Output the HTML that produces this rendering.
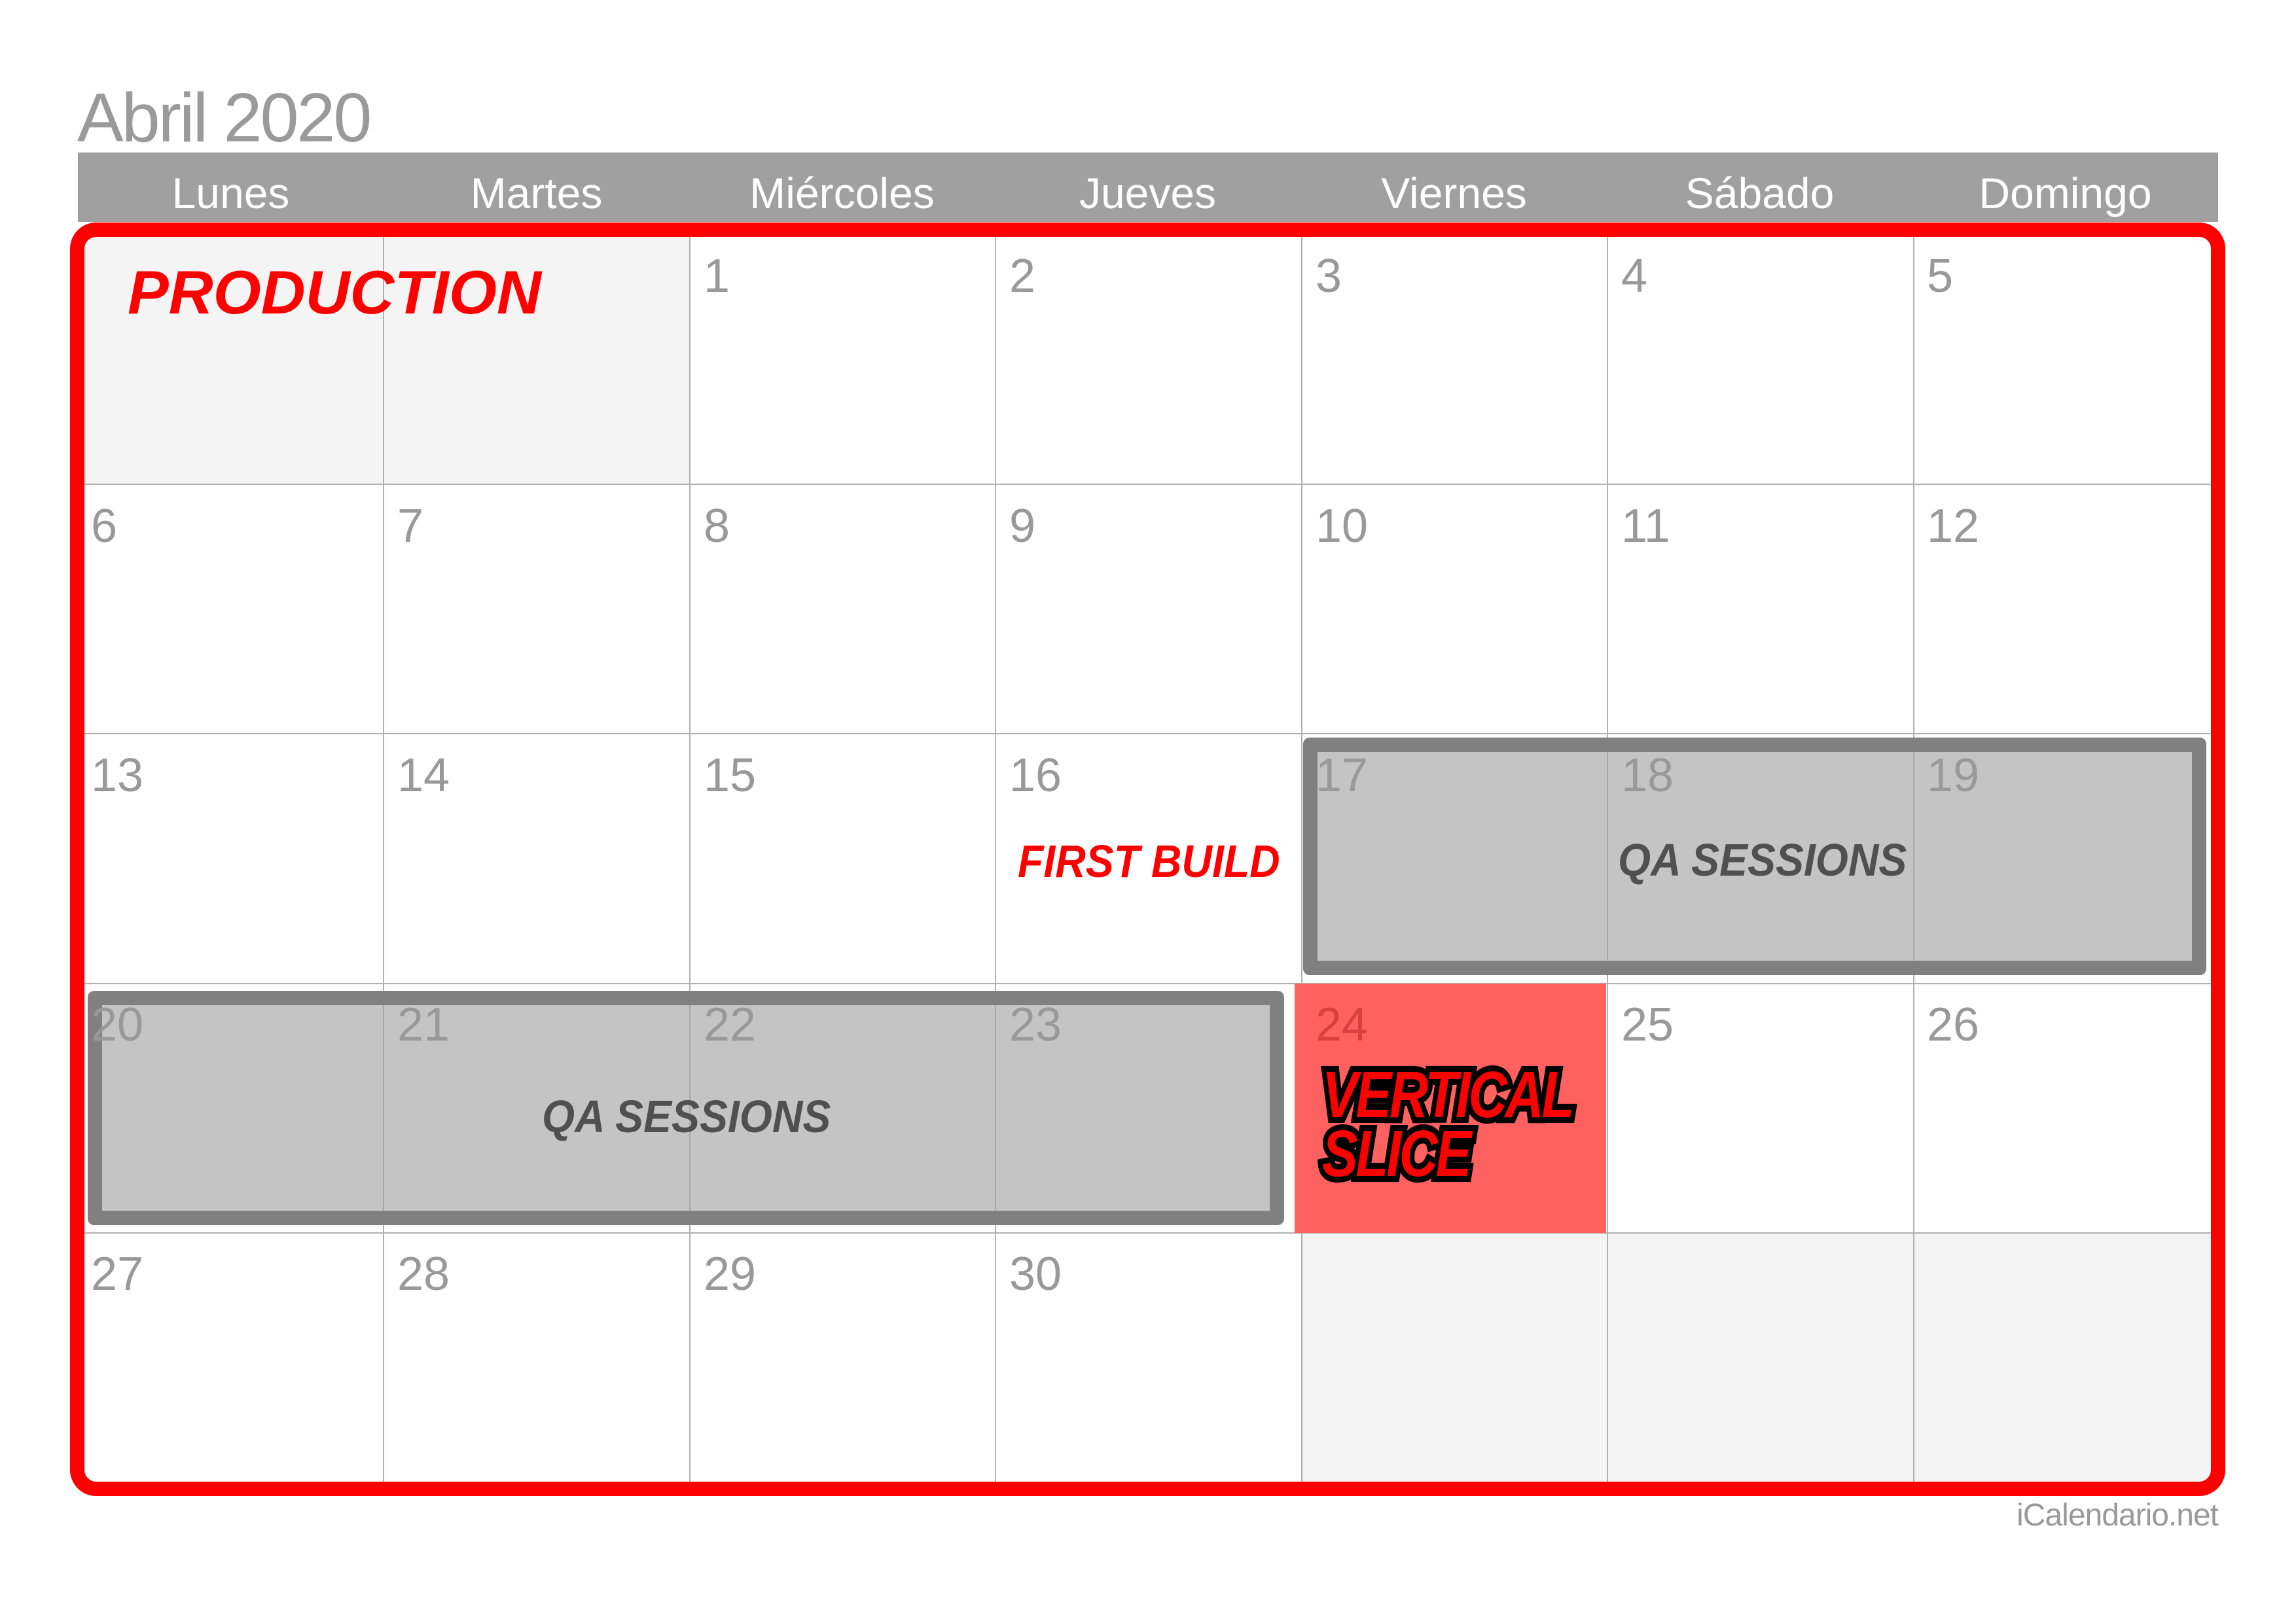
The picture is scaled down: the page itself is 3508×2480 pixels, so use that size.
<!DOCTYPE html>
<html><head><meta charset="utf-8"><style>
*{margin:0;padding:0;box-sizing:border-box}
body{width:3508px;height:2480px;background:#fff;position:relative;overflow:hidden;font-family:"Liberation Sans",sans-serif}
.a{position:absolute}
.title{left:118px;top:127px;font-size:106px;color:#9a9a9a;letter-spacing:-3px;line-height:1}
.hdr{left:119px;top:233px;width:3270px;height:106px;background:#a0a0a0}
.dn{top:262px;width:467px;text-align:center;color:#fff;font-size:66px;line-height:1}
.num{font-size:72px;color:#999;line-height:1}
.bi{font-weight:bold;font-style:italic;white-space:nowrap;line-height:1}
</style></head><body>
<div class="a title">Abril 2020</div>
<div class="a hdr"></div>
<div class="a dn" style="left:119px">Lunes</div>
<div class="a dn" style="left:586px">Martes</div>
<div class="a dn" style="left:1053px">Miércoles</div>
<div class="a dn" style="left:1520px">Jueves</div>
<div class="a dn" style="left:1988px">Viernes</div>
<div class="a dn" style="left:2455px">Sábado</div>
<div class="a dn" style="left:2922px">Domingo</div>

<div class="a" style="left:119px;top:348px;width:3270px;height:1930px;overflow:hidden;border-radius:30px">
<svg width="3270" height="1930" style="position:absolute;left:0;top:0">
<rect x="0" y="0" width="934" height="392" fill="#f4f4f4"/>
<rect x="1869" y="1536" width="1401" height="400" fill="#f4f4f4"/>
<g stroke="#b0b0b0" stroke-width="2">
<line x1="467" y1="0" x2="467" y2="1930"/><line x1="935" y1="0" x2="935" y2="1930"/>
<line x1="1402" y1="0" x2="1402" y2="1930"/><line x1="1870" y1="0" x2="1870" y2="1930"/>
<line x1="2337" y1="0" x2="2337" y2="1930"/><line x1="2805" y1="0" x2="2805" y2="1930"/>
<line x1="0" y1="392" x2="3270" y2="392"/><line x1="0" y1="773" x2="3270" y2="773"/>
<line x1="0" y1="1155" x2="3270" y2="1155"/><line x1="0" y1="1536" x2="3270" y2="1536"/>
</g>
</svg>
</div>

<div class="a" style="left:1978px;top:1503px;width:476px;height:381px;background:#ff6060"></div>

<div class="a" style="left:1991px;top:1127px;width:1380px;height:363px;background:#c4c4c4;border:22px solid #808080;border-radius:10px"></div>
<div class="a" style="left:134px;top:1514px;width:1828px;height:358px;background:#c4c4c4;border:22px solid #808080;border-radius:10px"></div>
<svg class="a" style="left:0;top:0" width="3508" height="2480">
<g stroke="#a8a8a8" stroke-width="2">
<line x1="2456" y1="1149" x2="2456" y2="1468"/><line x1="2924" y1="1149" x2="2924" y2="1468"/>
<line x1="586" y1="1536" x2="586" y2="1850"/><line x1="1054" y1="1536" x2="1054" y2="1850"/><line x1="1521" y1="1536" x2="1521" y2="1850"/>
</g></svg>

<div class="a num" style="left:1075px;top:386px">1</div>
<div class="a num" style="left:1542px;top:386px">2</div>
<div class="a num" style="left:2010px;top:386px">3</div>
<div class="a num" style="left:2477px;top:386px">4</div>
<div class="a num" style="left:2944px;top:386px">5</div>
<div class="a num" style="left:139px;top:768px">6</div>
<div class="a num" style="left:607px;top:768px">7</div>
<div class="a num" style="left:1075px;top:768px">8</div>
<div class="a num" style="left:1542px;top:768px">9</div>
<div class="a num" style="left:2010px;top:768px">10</div>
<div class="a num" style="left:2477px;top:768px">11</div>
<div class="a num" style="left:2944px;top:768px">12</div>
<div class="a num" style="left:139px;top:1149px">13</div>
<div class="a num" style="left:607px;top:1149px">14</div>
<div class="a num" style="left:1075px;top:1149px">15</div>
<div class="a num" style="left:1542px;top:1149px">16</div>
<div class="a num" style="left:2010px;top:1149px">17</div>
<div class="a num" style="left:2477px;top:1149px">18</div>
<div class="a num" style="left:2944px;top:1149px">19</div>
<div class="a num" style="left:139px;top:1530px">20</div>
<div class="a num" style="left:607px;top:1530px">21</div>
<div class="a num" style="left:1075px;top:1530px">22</div>
<div class="a num" style="left:1542px;top:1530px">23</div>
<div class="a num" style="left:2010px;top:1530px;color:#d84040">24</div>
<div class="a num" style="left:2477px;top:1530px">25</div>
<div class="a num" style="left:2944px;top:1530px">26</div>
<div class="a num" style="left:139px;top:1911px">27</div>
<div class="a num" style="left:607px;top:1911px">28</div>
<div class="a num" style="left:1075px;top:1911px">29</div>
<div class="a num" style="left:1542px;top:1911px">30</div>

<div class="a" style="left:107px;top:340px;width:3293px;height:1946px;border:22px solid #ff0000;border-radius:40px"></div>

<div class="a bi" style="left:195px;top:400px;font-size:94px;color:#ff0000">PRODUCTION</div>
<div class="a bi" style="left:1555px;top:1281px;font-size:70px;color:#ff0000;transform:scaleX(0.92);transform-origin:left top">FIRST BUILD</div>
<div class="a bi" style="left:2472px;top:1279px;font-size:70px;color:#505050;transform:scaleX(0.92);transform-origin:left top">QA SESSIONS</div>
<div class="a bi" style="left:828px;top:1671px;font-size:70px;color:#505050;transform:scaleX(0.92);transform-origin:left top">QA SESSIONS</div>
<div class="a bi" style="left:2020px;top:1628px;font-size:100px;color:#ff0000;line-height:90px;letter-spacing:-4px;-webkit-text-stroke:18px #000;paint-order:stroke fill;transform:scaleX(0.82);transform-origin:left top">VERTICAL<br>SLICE</div>

<div class="a" style="right:119px;top:2288px;font-size:48px;color:#999;letter-spacing:-1px">iCalendario.net</div>
</body></html>
